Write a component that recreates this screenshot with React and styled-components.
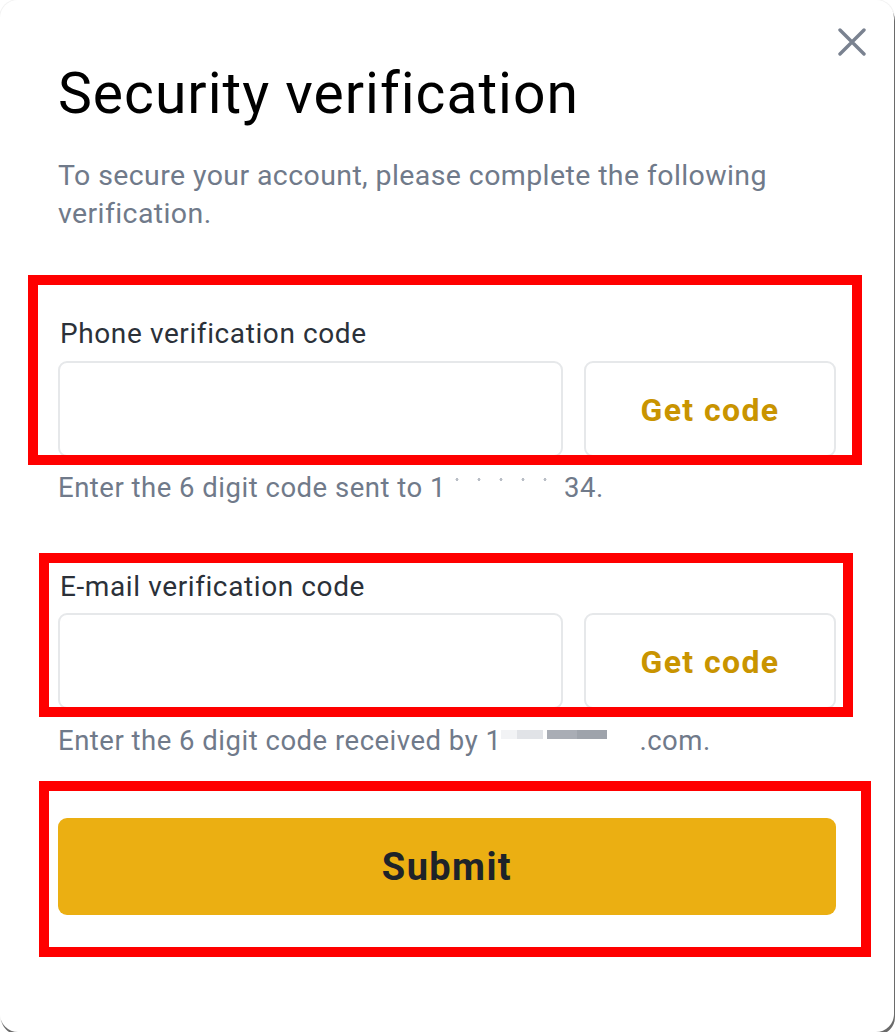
import React from 'react'
import styled, { createGlobalStyle } from 'styled-components'

const GlobalStyle = createGlobalStyle`
  html, body {
    margin: 0;
    padding: 0;
    background: #ffffff;
  }
  body {
    font-family: Roboto, "Noto Sans", "Liberation Sans", sans-serif;
    color: #1e2329;
  }
`

const colors = {
  text: '#1e2329',
  label: '#2b3139',
  muted: '#707a8a',
  line: '#e6e8ea',
  gold: '#c99400',
  yellow: '#ebaf12',
  mark: '#ff0000',
}

//
// Card shell
//
const Card = styled.div`
  position: relative;
  box-sizing: border-box;
  width: 894px;
  height: 1032px;
  padding: 28px 58px 0 58px;
  background: #ffffff;
  border-radius: 18px;
  box-shadow: 1px 3px 0 #6a6a6a, 0 0 0 1px rgba(0, 0, 0, 0.05);
  display: flex;
  flex-direction: column;
`

const Header = styled.div`
  display: flex;
  justify-content: flex-end;
  margin-right: -30px;
  height: 28px;
`

const CloseButton = styled.button`
  width: 28px;
  height: 28px;
  padding: 0;
  border: 0;
  background: none;
  cursor: pointer;
  display: flex;
`

const Title = styled.h1`
  margin: 6px 0 0;
  font-size: 57px;
  line-height: 64px;
  font-weight: 400;
  color: #000000;
  letter-spacing: 1px;
`

const Subtitle = styled.p`
  margin: 31px 0 0;
  font-size: 28.5px;
  line-height: 38px;
  letter-spacing: 0.4px;
  color: ${colors.muted};
  max-width: 760px;
`

//
// Field
//
const Field = styled.section`
  display: flex;
  flex-direction: column;
  margin-top: ${p => p.gap}px;
`

const Label = styled.label`
  font-size: 28px;
  line-height: 40px;
  letter-spacing: 0.6px;
  color: ${colors.label};
  margin: 0 0 ${p => p.space}px 2px;
`

const Row = styled.div`
  display: flex;
  gap: 21px;
`

const Input = styled.input`
  box-sizing: border-box;
  flex: 1;
  height: 96px;
  border: 2px solid ${colors.line};
  border-radius: 9px;
  background: #ffffff;
  outline: none;
  font-size: 28px;
  padding: 0 20px;
`

const CodeButton = styled.button`
  box-sizing: border-box;
  width: 252px;
  height: 96px;
  padding-top: 3px;
  border: 2px solid ${colors.line};
  border-radius: 9px;
  background: #ffffff;
  color: ${colors.gold};
  font-family: inherit;
  font-size: 32px;
  letter-spacing: 1.4px;
  font-weight: 700;
  cursor: pointer;
`

const Hint = styled.p`
  margin: ${p => p.space}px 0 0 0;
  font-size: 27.5px;
  line-height: 40px;
  letter-spacing: 0.5px;
  color: ${colors.muted};
  white-space: nowrap;
`

const Masked = styled.span`
  display: inline-block;
  width: ${p => p.width}px;
  height: 20px;
  vertical-align: baseline;
  background: ${p => p.fill};
`

const Submit = styled.button`
  margin-top: 57px;
  height: 97px;
  border: 0;
  border-radius: 9px;
  background: ${colors.yellow};
  color: ${colors.text};
  font-family: inherit;
  font-size: 38px;
  letter-spacing: 1.4px;
  font-weight: 700;
  cursor: pointer;
`

//
// Red annotation frames drawn over the screenshot
//
const Mark = styled.div`
  position: absolute;
  box-sizing: border-box;
  left: ${p => p.x}px;
  top: ${p => p.y}px;
  width: ${p => p.w}px;
  height: ${p => p.h}px;
  border: 10px solid ${colors.mark};
  pointer-events: none;
`

const CloseIcon = () => (
  <svg width="28" height="28" viewBox="0 0 28 28">
    <path
      d="M2 2 L26 26 M26 2 L2 26"
      stroke="#7a8290"
      strokeWidth="3.4"
      strokeLinecap="round"
    />
  </svg>
)

const phoneMask =
  'radial-gradient(circle, #b9bec6 1.2px, transparent 1.8px) 0 0 / 22px 5px repeat-x'
const mailMask =
  'linear-gradient(90deg, #f2f3f5 0 16px, #e1e3e7 16px 42px, #fff 42px 46px, #a9adb5 46px 76px, #9ea3ab 76px 106px, #fff 106px) 0 0 / 100% 9px no-repeat'

const App = () => (
  <>
    <GlobalStyle />
    <Card>
      <Header>
        <CloseButton aria-label="Close">
          <CloseIcon />
        </CloseButton>
      </Header>

      <Title>Security verification</Title>
      <Subtitle>
        To secure your account, please complete the following verification.
      </Subtitle>

      <Field gap={81}>
        <Label space={7}>Phone verification code</Label>
        <Row>
          <Input />
          <CodeButton>Get code</CodeButton>
        </Row>
        <Hint space={11}>
          Enter the 6 digit code sent to 1<Masked width={118} fill={phoneMask} />34.
        </Hint>
      </Field>

      <Field gap={59}>
        <Label space={6}>E-mail verification code</Label>
        <Row>
          <Input />
          <CodeButton>Get code</CodeButton>
        </Row>
        <Hint space={12}>
          Enter the 6 digit code received by 1<Masked width={138} fill={mailMask} />.com.
        </Hint>
      </Field>

      <Submit>Submit</Submit>

      <Mark x={28} y={275} w={834} h={190} />
      <Mark x={39} y={553} w={814} h={164} />
      <Mark x={39} y={781} w={832} h={176} />
    </Card>
  </>
)

export default App
